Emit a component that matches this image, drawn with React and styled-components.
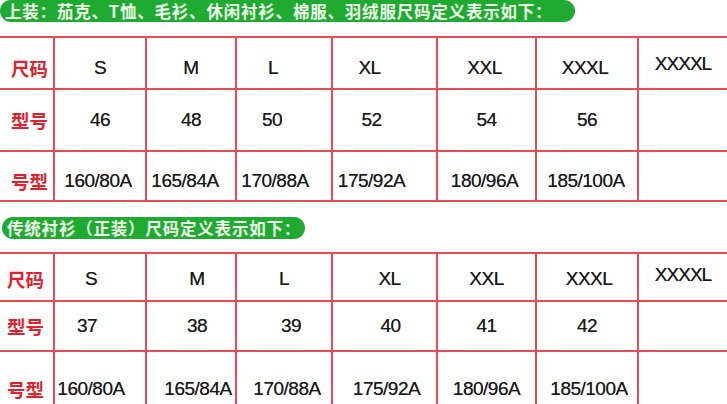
import React from "react";
import styled, { createGlobalStyle } from "styled-components";

const RED_LINE = "#e84a57";
const COLS = "55px 92px 90px 96px 105px 99px 102px 1fr";

const Global = createGlobalStyle`
  html, body { margin: 0; padding: 0; background: #fff; }
  body { width: 727px; height: 404px; overflow: hidden; }
`;

const Page = styled.div`
  width: 727px;
  display: flex;
  flex-direction: column;
  align-items: flex-start;
`;

const Banner = styled.div`
  box-sizing: border-box;
  width: ${(p) => p.$w}px;
  height: ${(p) => p.$h}px;
  margin-top: ${(p) => p.$mt}px;
  margin-left: ${(p) => p.$ml || 0}px;
  padding-left: ${(p) => p.$pl}px;
  padding-top: ${(p) => p.$pt || 0}px;
  background: #1fab31;
  border-radius: 11px;
  display: flex;
  align-items: center;
  color: #eefbe9;
  font-family: "Noto Sans CJK SC", "Noto Sans", sans-serif;
  font-weight: 700;
  font-size: 16.5px;
  line-height: 1;
  letter-spacing: 0.8px;
  white-space: nowrap;
`;

const Table = styled.div`
  width: 727px;
  margin-top: ${(p) => p.$mt}px;
  display: flex;
  flex-direction: column;
  border-bottom: ${(p) => (p.$closed ? `2px solid ${RED_LINE}` : "none")};
`;

const Row = styled.div`
  box-sizing: border-box;
  display: grid;
  grid-template-columns: ${COLS};
  height: ${(p) => p.$h}px;
  border-top: 2px solid ${RED_LINE};
`;

const CellBase = styled.div`
  box-sizing: border-box;
  display: flex;
  align-items: center;
  justify-content: center;
  white-space: nowrap;
  padding-top: ${(p) => Math.max(0, 2 * (p.$dy || 0))}px;
  padding-bottom: ${(p) => Math.max(0, -2 * (p.$dy || 0))}px;
  padding-left: ${(p) => Math.max(0, 2 * (p.$dx || 0))}px;
  padding-right: ${(p) => Math.max(0, -2 * (p.$dx || 0))}px;
  border-right: ${(p) => (p.$last ? "none" : `2px solid ${RED_LINE}`)};
`;

const Label = styled(CellBase)`
  color: #e3202c;
  font-family: "Noto Sans CJK SC", "Noto Sans", sans-serif;
  font-weight: 700;
  font-size: 18.5px;
  letter-spacing: 0;
`;

const Cell = styled(CellBase)`
  color: #1a1a1a;
  font-family: "Liberation Sans", Arial, sans-serif;
  font-size: 19px;
  letter-spacing: ${(p) => (p.$tight ? "-1px" : "-0.5px")};
  text-shadow: 0 0 0.6px rgba(0, 0, 0, 0.7);
`;

const tables = [
  {
    mt: 14,
    closed: true,
    labelDx: 3,
    rows: [
      {
        label: "尺码",
        h: 52,
        dy: 5,
        values: ["S", "M", "L", "XL", "XXL", "XXXL", "XXXXL"],
        dx: [0, 0, -11, -15, -2, -2, 0],
        lastDy: -4,
      },
      {
        label: "型号",
        h: 62,
        dy: 0,
        values: ["46", "48", "50", "52", "54", "56", ""],
        dx: [0, 0, -12, -13, 0, 0, 0],
      },
      {
        label: "号型",
        h: 50,
        dy: 5,
        values: ["160/80A", "165/84A", "170/88A", "175/92A", "180/96A", "185/100A", ""],
        dx: [-2, -6, -9, -13, -2, -1, 0],
      },
    ],
  },
  {
    mt: 13,
    closed: false,
    labelDx: -1,
    rows: [
      {
        label: "尺码",
        h: 48,
        dy: 2,
        values: ["S", "M", "L", "XL", "XXL", "XXXL", "XXXXL"],
        dx: [-9, 6, 0, 5, 0, 2, 0],
        lastDy: -4,
      },
      {
        label: "型号",
        h: 50,
        dy: 0,
        values: ["37", "38", "39", "40", "41", "42", ""],
        dx: [-13, 6, 7, 6, 0, 0, 0],
      },
      {
        label: "号型",
        h: 56,
        dy: 10,
        values: ["160/80A", "165/84A", "170/88A", "175/92A", "180/96A", "185/100A", ""],
        dx: [-9, 7, 3, 2, 0, 2, 0],
      },
    ],
  },
];

function SizeTable({ data }) {
  return (
    <Table $mt={data.mt} $closed={data.closed}>
      {data.rows.map((r) => (
        <Row key={r.label} $h={r.h}>
          <Label $dx={data.labelDx} $dy={r.dy}>
            {r.label}
          </Label>
          {r.values.map((v, i) => {
            const last = i === r.values.length - 1;
            return (
              <Cell
                key={i}
                $last={last}
                $dx={r.dx[i]}
                $dy={last && r.lastDy ? r.dy + r.lastDy : r.dy}
                $tight={v === "XXXXL"}
              >
                {v}
              </Cell>
            );
          })}
        </Row>
      ))}
    </Table>
  );
}

export default function App() {
  return (
    <>
      <Global />
      <Page>
        <Banner $w={575} $h={22} $mt={0} $pl={5} $pt={1}>
          上装：茄克、T恤、毛衫、休闲衬衫、棉服、羽绒服尺码定义表示如下：
        </Banner>
        <SizeTable data={tables[0]} />
        <Banner $w={303} $h={22} $mt={15} $ml={2} $pl={5}>
          传统衬衫（正装）尺码定义表示如下：
        </Banner>
        <SizeTable data={tables[1]} />
      </Page>
    </>
  );
}
